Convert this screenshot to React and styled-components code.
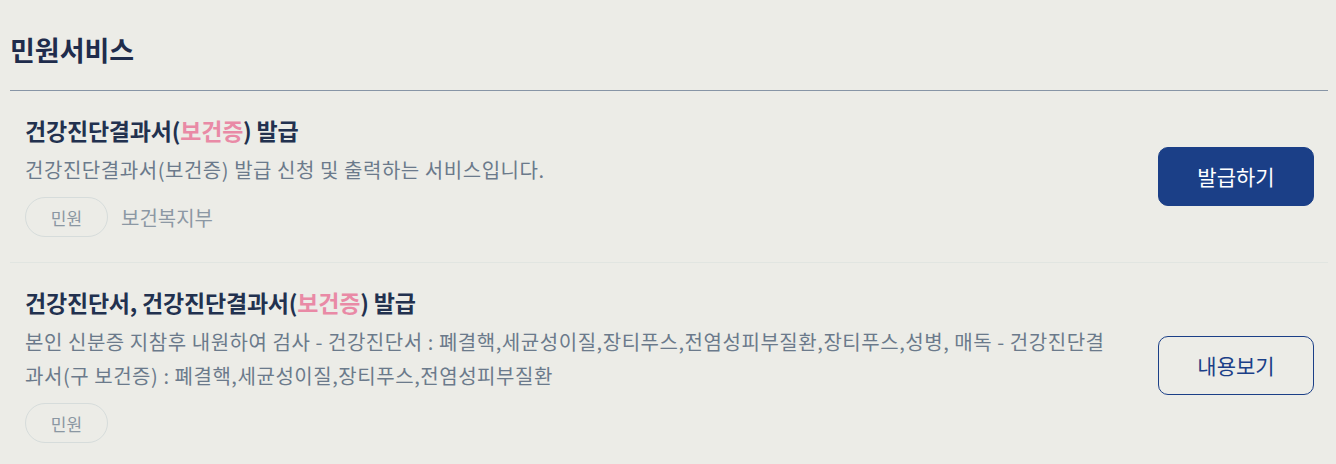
import React from "react";
import styled, { createGlobalStyle } from "styled-components";

const GlobalStyle = createGlobalStyle`
  html, body {
    margin: 0;
    padding: 0;
    background: #ecece7;
    font-family: "Noto Sans CJK KR", "Noto Sans", sans-serif;
  }
`;

const services = [
  {
    id: 1,
    before: "건강진단결과서(",
    highlight: "보건증",
    after: ") 발급",
    desc: "건강진단결과서(보건증) 발급 신청 및 출력하는 서비스입니다.",
    agency: "보건복지부",
    action: "발급하기",
    primary: true,
  },
  {
    id: 2,
    before: "건강진단서, 건강진단결과서(",
    highlight: "보건증",
    after: ") 발급",
    desc:
      "본인 신분증 지참후 내원하여 검사 - 건강진단서 : 폐결핵,세균성이질,장티푸스,전염성피부질환,장티푸스,성병, 매독 - 건강진단결과서(구 보건증) : 폐결핵,세균성이질,장티푸스,전염성피부질환",
    agency: "",
    action: "내용보기",
    primary: false,
  },
];

const App = () => {
  return (
    <Wrapper>
      <GlobalStyle />
      <Heading>민원서비스</Heading>
      <List>
        {services.map((s) => (
          <Item key={s.id}>
            <Info>
              <Title>
                {s.before}
                <Pink>{s.highlight}</Pink>
                {s.after}
              </Title>
              <Desc>{s.desc}</Desc>
              <Meta>
                <Tag>민원</Tag>
                {s.agency && <Agency>{s.agency}</Agency>}
              </Meta>
            </Info>
            <ActionButton $primary={s.primary}>{s.action}</ActionButton>
          </Item>
        ))}
      </List>
    </Wrapper>
  );
};

const Wrapper = styled.section`
  padding: 32px 8px 0 10px;
`;

const Heading = styled.h2`
  margin: 0;
  font-size: 27px;
  line-height: 36px;
  font-weight: 700;
  color: #1f2c4c;
  padding-bottom: 22px;
  border-bottom: 1px solid #8795a6;
`;

const List = styled.ul`
  list-style: none;
  margin: 0;
  padding: 0;
`;

const Item = styled.li`
  display: flex;
  align-items: center;
  gap: 38px;
  padding: 24px 14px 25px 15px;
  border-bottom: 1px solid #e1e5e1;

  &:last-child {
    border-bottom: none;
  }
`;

const Info = styled.div`
  flex: 1;
  min-width: 0;
`;

const Title = styled.h3`
  margin: 0;
  font-size: 23px;
  line-height: 30px;
  font-weight: 700;
  color: #22314f;
  letter-spacing: -0.2px;
`;

const Pink = styled.span`
  color: #e98aa6;
`;

const Desc = styled.p`
  margin: 8px 0 0;
  font-size: 20px;
  line-height: 34px;
  letter-spacing: 0.55px;
  color: #6b7a8b;
`;

const Meta = styled.div`
  display: flex;
  align-items: center;
  gap: 13px;
  margin-top: 10px;
`;

const Tag = styled.span`
  display: inline-flex;
  align-items: center;
  justify-content: center;
  width: 83px;
  height: 40px;
  box-sizing: border-box;
  border: 1px solid #d6dcdb;
  border-radius: 20px;
  font-size: 17px;
  color: #8b97a2;
`;

const Agency = styled.span`
  font-size: 20px;
  color: #8c98a4;
`;

const ActionButton = styled.button`
  flex: 0 0 156px;
  height: 59px;
  box-sizing: border-box;
  border-radius: 10px;
  border: 1px solid #1b3f87;
  background: ${({ $primary }) => ($primary ? "#1b3f87" : "transparent")};
  color: ${({ $primary }) => ($primary ? "#ffffff" : "#1b3f87")};
  font-family: inherit;
  font-size: 21px;
  cursor: pointer;
`;

export default App;
